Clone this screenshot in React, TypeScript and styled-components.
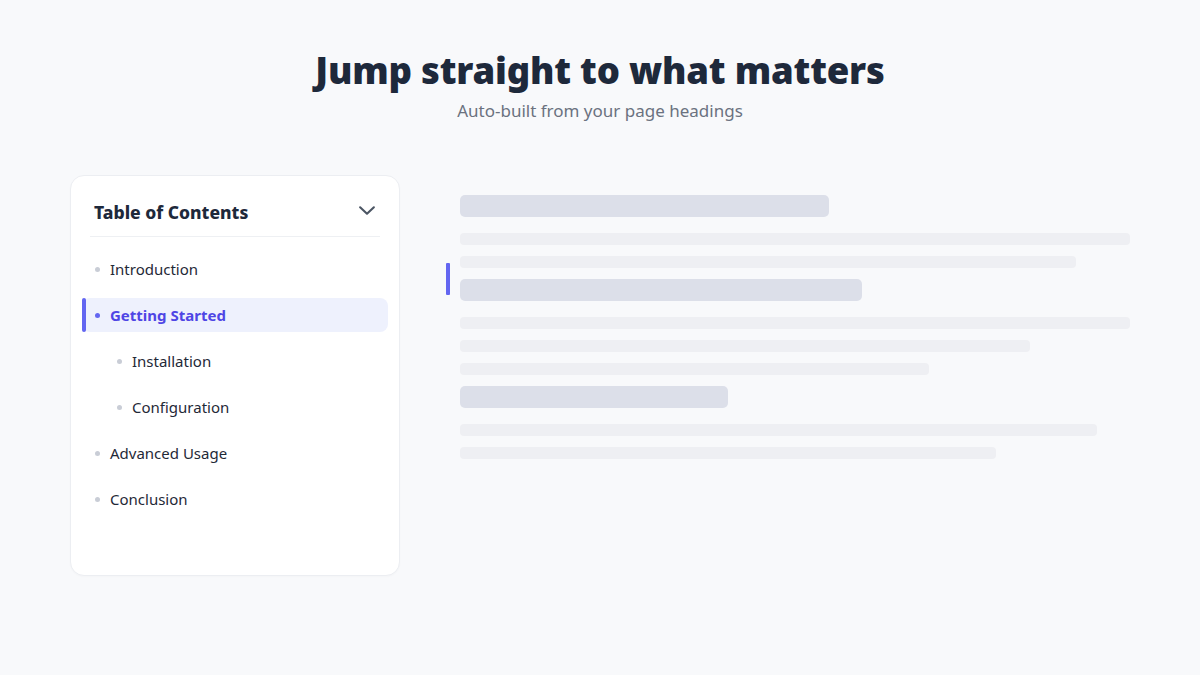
import React from 'react';
import styled, { createGlobalStyle } from 'styled-components';

const GlobalStyle = createGlobalStyle`
  html, body {
    margin: 0;
    padding: 0;
    background: #f8f9fb;
  }
  body {
    font-family: "Noto Sans", "Open Sans", sans-serif;
    color: #1f2937;
  }
`;

const Page = styled.div`
  width: 1200px;
  height: 675px;
  box-sizing: border-box;
  padding: 47px 70px 0;
`;

const Hero = styled.header`
  display: flex;
  flex-direction: column;
  align-items: center;
`;

const Title = styled.h1`
  margin: 0;
  font-size: 36.5px;
  line-height: 46px;
  font-weight: 900;
  color: #1e293b;
  letter-spacing: -0.2px;
`;

const Subtitle = styled.p`
  margin: 6px 0 0;
  font-size: 17px;
  line-height: 24px;
  color: #6b7280;
`;

const Layout = styled.div`
  margin-top: 52px;
  display: grid;
  grid-template-columns: 330px 670px;
  column-gap: 60px;
  align-items: start;
`;

const Card = styled.nav`
  background: #ffffff;
  border: 1px solid #eceef2;
  border-radius: 14px;
  padding: 0 11px 59px;
  box-shadow: 0 1px 2px rgba(17, 24, 39, 0.02);
`;

const CardHeader = styled.div`
  margin: 0 8px;
  padding: 24px 4px 12px;
  display: flex;
  align-items: center;
  justify-content: space-between;
  border-bottom: 1px solid #eef0f3;
`;

const CardTitle = styled.h2`
  margin: 0;
  font-size: 17.5px;
  line-height: 24px;
  font-weight: 800;
  color: #1e293b;
`;

const Chevron = styled.svg`
  width: 22px;
  height: 22px;
  color: #4b5563;
  margin: -4px -2px 0 0;
`;

const List = styled.ul`
  list-style: none;
  margin: 0;
  padding: 15px 0 0;
  display: flex;
  flex-direction: column;
  gap: 12px;
`;

const Item = styled.li<{ $active?: boolean; $depth?: number }>`
  position: relative;
  height: 34px;
  display: flex;
  align-items: center;
  gap: 10px;
  padding-left: ${p => (p.$depth ? 35 : 13)}px;
  border-radius: 8px;
  font-size: 15px;
  font-weight: ${p => (p.$active ? 700 : 400)};
  color: ${p => (p.$active ? '#4f46e5' : '#1f2937')};
  background: ${p => (p.$active ? '#eef1fd' : 'transparent')};

  &::before {
    content: '';
    width: 5px;
    height: 5px;
    border-radius: 50%;
    background: ${p => (p.$active ? '#6366f1' : '#c9cdd6')};
    flex-shrink: 0;
  }

  &::after {
    content: '';
    display: ${p => (p.$active ? 'block' : 'none')};
    position: absolute;
    left: 0;
    top: 0;
    bottom: 0;
    width: 4px;
    border-radius: 2px;
    background: #6366f1;
  }
`;

const Skeleton = styled.div`
  position: relative;
  margin-top: 20px;
  display: flex;
  flex-direction: column;
  gap: 11px;
`;

const Bar = styled.div<{ $heading?: boolean }>`
  height: ${p => (p.$heading ? 22 : 12)}px;
  border-radius: ${p => (p.$heading ? 5 : 4)}px;
  background: ${p => (p.$heading ? '#dcdfe9' : '#eeeff3')};
  margin-bottom: ${p => (p.$heading ? 5 : 0)}px;
`;

const Marker = styled.span`
  position: absolute;
  left: -14px;
  top: 68px;
  width: 4px;
  height: 32px;
  border-radius: 1px;
  background: #6366f1;
`;

const toc = [
  { label: 'Introduction', depth: 0 },
  { label: 'Getting Started', depth: 0, active: true },
  { label: 'Installation', depth: 1 },
  { label: 'Configuration', depth: 1 },
  { label: 'Advanced Usage', depth: 0 },
  { label: 'Conclusion', depth: 0 },
];

const bars = [
  { heading: true, width: 55 },
  { width: 100 },
  { width: 92 },
  { heading: true, width: 60 },
  { width: 100 },
  { width: 85 },
  { width: 70 },
  { heading: true, width: 40 },
  { width: 95 },
  { width: 80 },
];

const App: React.FC = () => {
  return (
    <Page>
      <GlobalStyle />
      <Hero>
        <Title>Jump straight to what matters</Title>
        <Subtitle>Auto-built from your page headings</Subtitle>
      </Hero>
      <Layout>
        <Card>
          <CardHeader>
            <CardTitle>Table of Contents</CardTitle>
            <Chevron viewBox="0 0 24 24" fill="none" stroke="currentColor" strokeWidth={2.3} strokeLinecap="round" strokeLinejoin="round">
              <path d="M4.5 9l7.5 7 7.5-7" />
            </Chevron>
          </CardHeader>
          <List>
            {toc.map(item => (
              <Item key={item.label} $active={item.active} $depth={item.depth}>
                {item.label}
              </Item>
            ))}
          </List>
        </Card>
        <Skeleton>
          <Marker />
          {bars.map((b, i) => (
            <Bar key={i} $heading={b.heading} style={{ width: `${b.width}%` }} />
          ))}
        </Skeleton>
      </Layout>
    </Page>
  );
};

export default App;
